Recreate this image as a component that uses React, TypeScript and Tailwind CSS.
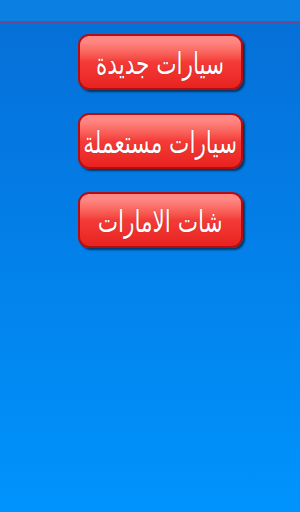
import React from "react";

const items = ["سيارات جديدة", "سيارات مستعملة", "شات الامارات"];

export default function App() {
  return (
    <div className="w-[300px] h-[512px] flex flex-col bg-gradient-to-b from-[#066ed6] to-[#0093fd] overflow-hidden">
      <div className="h-[21px] bg-[#0b80e2] shrink-0" />
      <div className="h-[2px] bg-[#6a4c8c] shrink-0" />
      <div className="flex flex-col items-center gap-[23px] pt-[11px] pl-[21px]">
        {items.map((t) => (
          <button
            key={t}
            dir="rtl"
            className="w-[165px] h-[56px] rounded-[11px] border-2 border-[#b30d14] bg-gradient-to-b from-[#ff8884] from-10% via-[#f43a37] via-50% to-[#e8221f] shadow-[2px_2px_2px_rgba(0,0,0,0.55)] flex items-center justify-center overflow-hidden pt-[3px]"
          >
            <span className="inline-block text-white text-[30px] leading-none whitespace-nowrap scale-x-[0.8] [font-family:'DejaVu_Sans_Condensed','DejaVu_Sans',sans-serif] [text-shadow:0_0_1px_rgba(120,0,0,0.6)]">
              {t}
            </span>
          </button>
        ))}
      </div>
    </div>
  );
}
